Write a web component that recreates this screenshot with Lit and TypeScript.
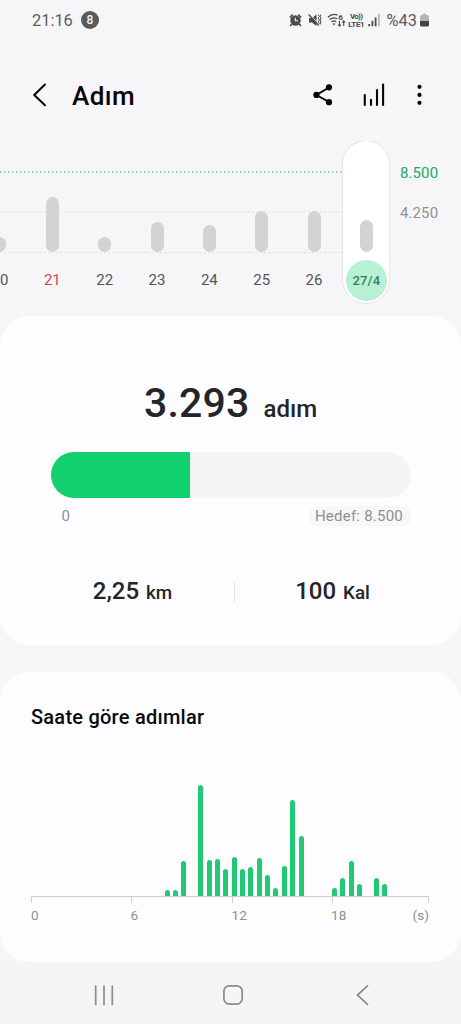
import { LitElement, html, css, svg } from "lit";
import { customElement } from "lit/decorators.js";
import { classMap } from "lit/directives/class-map.js";

interface Day {
  label: string;
  height: number;
  kind?: "sunday" | "today";
}

const DAYS: Day[] = [
  { label: "20", height: 15 },
  { label: "21", height: 55, kind: "sunday" },
  { label: "22", height: 15 },
  { label: "23", height: 30 },
  { label: "24", height: 27 },
  { label: "25", height: 41 },
  { label: "26", height: 41 },
  { label: "27/4", height: 32, kind: "today" },
];

// Bar heights per half hour, midnight to midnight.
const HALF_HOURS: number[] = [
  0, 0, 0, 0, 0, 0, 0, 0, 0, 0, 0, 0, 0, 0, 0, 0,
  6.5, 6.5, 35.5, 0, 111, 36.5, 37, 27, 39, 27, 29, 38.5, 21, 8, 30, 96.5,
  60, 0, 0, 0, 8, 18, 35, 12, 0, 18, 12, 0, 0, 0, 0, 0,
];

const STEPS = 3293;
const GOAL = 8500;

@customElement("status-bar")
class StatusBar extends LitElement {
  static styles = css`
    :host {
      display: flex;
      align-items: center;
      height: 40px;
      padding: 0 32px 0 32px;
      color: #5c5c5f;
      font-size: 16.4px;
    }
    .badge {
      display: flex;
      align-items: center;
      justify-content: center;
      width: 18px;
      height: 18px;
      margin-left: 8px;
      border-radius: 50%;
      background: #5a5a5c;
      color: #f6f6f8;
      font-size: 12px;
      font-weight: 500;
    }
    .icons {
      margin-left: auto;
      margin-right: 5px;
    }
    .battery {
      margin-left: 3px;
    }
    .tiny {
      font-size: 8px;
      font-weight: 700;
    }
    svg {
      display: block;
    }
  `;
  render() {
    return html`
      <span>21:16</span>
      <span class="badge">8</span>
      <svg class="icons" width="94" height="20" viewBox="288 10 94 20" fill="#4a4a4c">
        ${svg`
          <circle cx="295.5" cy="20.5" r="5.2"/>
          <path d="M295.3 17.800v3h2.700" fill="none" stroke="#f6f6f8" stroke-width="1.100"/>
          <path d="M289.8 17.5l3-3M301.2 17.5l-3-3M291.6 24l-1.400 2M299.400 24l1.400 2" stroke="#4a4a4c" stroke-width="1.700"/>
          <path d="M309 18h3l4.500-3.500v11.500l-4.500-3.500h-3z"/>
          <path d="M309.600 14l9.500 10.500" stroke="#f6f6f8" stroke-width="1"/>
          <path d="M308.700 14.500l10 11" stroke="#4a4a4c" stroke-width="1.300"/>
          <path d="M318.200 14.500l1.200 1.800-1.200 1.900 1.200 1.900-1.200 1.900 1.200 1.900M320.900 14.500l-.7 1.800.7 1.900-.7 1.900.7 1.900-.7 2.500" fill="none" stroke="#4a4a4c" stroke-width="1"/>
          <path d="M328 17.200a8.800 8.800 0 0 1 9.600-2M329.700 19.600a6.500 6.500 0 0 1 7.500-.8M331.600 21.900a3.800 3.800 0 0 1 4.600-.2" fill="none" stroke="#4a4a4c" stroke-width="1.300"/>
          <path d="M332.500 23.500h3l-1.500 1.900z"/>
          <text class="tiny" x="338.300" y="19.500">6</text>
          <path d="M339.500 21v5M338 24.500l1.500 1.700 1.500-1.700M343.700 26v-5M342.200 22.500l1.500-1.700 1.500 1.700" fill="none" stroke="#4a4a4c" stroke-width="1.100"/>
          <text class="tiny" x="350" y="19.300" textLength="13">Vo))</text>
          <text class="tiny" x="348.200" y="27" textLength="16.500">LTE1</text>
          <path d="M368.300 24h1.800v2.300h-1.800zM371.500 20.800h1.800v5.500h-1.800zM374.700 17.500h1.800v8.800h-1.800z"/>
          <path d="M378 14h1.800v12.300h-1.800z" fill="#b8b8ba"/>
        `}
      </svg>
      <span>%43</span>
      <svg class="battery" width="9" height="14" viewBox="0 0 9 14">
        ${svg`
          <path d="M3 .5h3v1.500h1.500q1.500 0 1.500 1.500v5H0v-5q0-1.500 1.500-1.500H3z" fill="#b4b4b6"/>
          <path d="M0 8h9v4q0 1.500-1.500 1.500h-6q-1.500 0-1.500-1.500z" fill="#454547"/>
        `}
      </svg>
    `;
  }
}

@customElement("title-bar")
class TitleBar extends LitElement {
  static styles = css`
    :host {
      display: flex;
      align-items: center;
      height: 101px;
      box-sizing: border-box;
      padding: 9px 31px 0 31px;
      color: #050505;
    }
    h1 {
      margin: 1px auto 0 23px;
      font-size: 26px;
      line-height: 32px;
      font-weight: 500;
      letter-spacing: 0.450px;
    }
    svg {
      display: block;
      fill: none;
      stroke: currentColor;
    }
    .share {
      margin-right: 28px;
    }
    .bars {
      margin-right: 22px;
    }
    .solid {
      fill: currentColor;
      stroke: none;
    }
  `;
  render() {
    return html`
      <svg width="18" height="26" viewBox="31 82 18 26" stroke-width="2" stroke-linecap="round" stroke-linejoin="round">
        ${svg`<path d="M45 84.500L34.200 95 45 105.200"/>`}
      </svg>
      <h1>Adım</h1>
      <svg class="share" width="22" height="24" viewBox="312 83 22 24" stroke-width="2">
        ${svg`<path d="M329 87.500L316.500 95 329 102"/>
        <g class="solid"><circle cx="329" cy="87.300" r="3.100"/><circle cx="316.400" cy="94.900" r="3.100"/><circle cx="329" cy="102.200" r="3.100"/></g>`}
      </svg>
      <svg class="bars" width="24" height="26" viewBox="362 82 24 26" stroke-width="2.100" stroke-linecap="round">
        ${svg`<path d="M364.800 95v10M371 99.700v5.300M377 90v15M383.100 84.500v20.500"/>`}
      </svg>
      <svg class="solid" width="22" height="24" viewBox="408 83 22 24">
        ${svg`<circle cx="419.500" cy="86.800" r="2.100"/><circle cx="419.500" cy="94.900" r="2.100"/><circle cx="419.500" cy="102.800" r="2.100"/>`}
      </svg>
    `;
  }
}

@customElement("daily-chart")
class DailyChart extends LitElement {
  static styles = css`
    :host {
      display: grid;
      grid-template-columns: 392px 1fr;
      height: 175px;
      overflow: hidden;
    }
    .grid,
    .days {
      grid-area: 1 / 1;
    }
    .grid {
      display: block;
    }
    .days {
      display: flex;
      width: 418.800px;
      margin-left: -26.200px;
      align-items: flex-start;
    }
    .day {
      display: flex;
      flex-direction: column;
      align-items: center;
      justify-content: flex-end;
      flex: 0 0 52.350px;
      height: 162px;
      box-sizing: border-box;
      padding-bottom: 2.500px;
      color: #555558;
    }
    .slot {
      display: flex;
      justify-content: center;
      flex: 1;
      align-items: flex-end;
      padding-bottom: 7.500px;
    }
    .bar {
      width: 13px;
      border-radius: 6.500px;
      background: #d3d3d4;
    }
    .label {
      display: flex;
      align-items: center;
      justify-content: center;
      width: 41px;
      height: 41px;
      flex: none;
      border-radius: 50%;
      font-size: 15px;
    }
    .sunday {
      color: #d6455a;
    }
    .today {
      flex-basis: 46px;
      margin-left: 3.200px;
      border-radius: 23px;
      background: #fff;
      box-shadow: 0 0 0 0.500px #dcdcde, 0 0 2px rgba(0, 0, 0, 0.080);
    }
    .today .label {
      background: #b7f0d4;
      color: #2e8460;
      font-size: 13px;
      font-weight: 500;
      letter-spacing: 0.150px;
    }
    .scale {
      display: flex;
      flex-direction: column;
      padding: 21.500px 0 0 8px;
      gap: 20px;
      font-size: 15px;
      line-height: 20px;
      letter-spacing: 0.100px;
      color: #929296;
    }
    .goal {
      color: #22a869;
    }
  `;
  render() {
    return html`
      <svg class="grid" width="392" height="175" fill="none">
        ${svg`
          <path d="M0 31h344" stroke="#6fc9a8" stroke-width="1.500" stroke-dasharray="1.500 2.500"/>
          <path d="M0 71h344M0 111.500h344" stroke="#dadadd" stroke-width="1.200" stroke-dasharray="1.500 2.500"/>
        `}
      </svg>
      <div class="days">
        ${DAYS.map(
          (d) => html`
            <div class=${classMap({ day: true, sunday: d.kind === "sunday", today: d.kind === "today" })}>
              <div class="slot"><div class="bar" style="height:${d.height}px"></div></div>
              <div class="label">${d.label}</div>
            </div>
          `
        )}
      </div>
      <div class="scale"><span class="goal">8.500</span><span>4.250</span></div>
    `;
  }
}

@customElement("summary-card")
class SummaryCard extends LitElement {
  static styles = css`
    :host {
      display: block;
      height: 329px;
      box-sizing: border-box;
      padding-top: 62px;
      border-radius: 30px;
      background: #fdfdff;
      color: #252528;
      font-weight: 500;
    }
    .total {
      display: flex;
      align-items: baseline;
      justify-content: center;
      gap: 14px;
      height: 50px;
      line-height: 50px;
      font-size: 41px;
      letter-spacing: 0.200px;
    }
    .total small {
      font-size: 24px;
      letter-spacing: 0;
    }
    .track {
      height: 46px;
      margin: 24px 50px 0 51px;
      border-radius: 23px;
      overflow: hidden;
      background: #f5f5f5;
    }
    .fill {
      height: 100%;
      background: #12d06e;
    }
    .range {
      display: flex;
      justify-content: space-between;
      align-items: center;
      margin: 8px 50px 0 61.500px;
      font-size: 15px;
      line-height: 20px;
      font-weight: 400;
      color: #8f8f91;
    }
    .chip {
      padding: 0 8px 0 6px;
      border-radius: 8px;
      background: #f7f7f7;
      letter-spacing: 0.230px;
    }
    .stats {
      display: grid;
      grid-template-columns: 202px 1px 196px;
      align-items: center;
      margin: 49.500px 0 0 31.500px;
      height: 30px;
    }
    .stat {
      display: flex;
      align-items: baseline;
      justify-content: center;
      gap: 7px;
      font-size: 24px;
      line-height: 30px;
    }
    .stat small {
      font-size: 18.800px;
    }
    .rule {
      height: 20px;
      background: #e4e4e6;
    }
  `;
  render() {
    return html`
      <div class="total"><span>3.293</span><small>adım</small></div>
      <div class="track"><div class="fill" style="width:${(STEPS / GOAL) * 100}%"></div></div>
      <div class="range"><span>0</span><span class="chip">Hedef: 8.500</span></div>
      <div class="stats">
        <div class="stat"><span>2,25</span><small>km</small></div>
        <div class="rule"></div>
        <div class="stat"><span>100</span><small>Kal</small></div>
      </div>
    `;
  }
}

@customElement("hourly-card")
class HourlyCard extends LitElement {
  static styles = css`
    :host {
      display: block;
      height: 290px;
      box-sizing: border-box;
      margin-top: 27px;
      padding: 32px 32px 0 31px;
      border-radius: 30px;
      background: #fdfdff;
    }
    h2 {
      margin: 0;
      font-size: 20px;
      line-height: 26px;
      font-weight: 500;
      letter-spacing: 0.240px;
      color: #0a0a0a;
    }
    .plot {
      display: grid;
      grid-template-columns: repeat(48, 8.360px);
      align-items: end;
      height: 166px;
    }
    .bar {
      width: 5px;
      border-radius: 2.500px 2.500px 0 0;
      background: #20c972;
    }
    .axis {
      display: grid;
      grid-template-columns: 100.300px 101px 100px 1fr;
      border-top: 1px solid #cfcfd1;
      border-right: 1px solid #cfcfd1;
      height: 7px;
      box-sizing: border-box;
    }
    .tick {
      border-left: 1px solid #cfcfd1;
    }
    .hours {
      display: grid;
      grid-template-columns: 99.500px 101px 99.500px 1fr auto;
      padding-top: 3px;
      font-size: 13.600px;
      line-height: 18px;
      color: #8f8f92;
    }
  `;
  render() {
    return html`
      <h2>Saate göre adımlar</h2>
      <div class="plot">
        ${HALF_HOURS.map((h) => html`<div class="bar" style="height:${h}px"></div>`)}
      </div>
      <div class="axis">
        <div class="tick"></div><div class="tick"></div><div class="tick"></div><div class="tick"></div>
      </div>
      <div class="hours">
        <span>0</span><span>6</span><span>12</span><span>18</span><span>(s)</span>
      </div>
    `;
  }
}

@customElement("nav-bar")
class NavBar extends LitElement {
  static styles = css`
    :host {
      display: flex;
      justify-content: space-between;
      height: 62px;
      box-sizing: border-box;
      padding: 22px 87px 0 93px;
      background: #f5f5f5;
    }
    svg {
      display: block;
      fill: none;
      stroke: #8a8a8c;
      stroke-width: 1.700px;
      stroke-linecap: round;
    }
  `;
  render() {
    return html`
      <svg width="22" height="22">${svg`<path d="M2.700 2v18.500M11 2v18.500M19.300 2v18.500"/>`}</svg>
      <svg width="22" height="22">${svg`<rect x="0.900" y="1.800" width="18.300" height="18.300" rx="5.500"/>`}</svg>
      <svg width="22" height="22">${svg`<path d="M15.500 1.800L5.500 11l10 9.300"/>`}</svg>
    `;
  }
}

@customElement("app-root")
class AppRoot extends LitElement {
  static styles = css`
    :host {
      display: block;
      width: 461px;
      height: 1024px;
      overflow: hidden;
      background: #f6f6f8;
      font-family: Roboto, "Noto Sans", sans-serif;
    }
  `;
  render() {
    return html`
      <status-bar></status-bar>
      <title-bar></title-bar>
      <daily-chart></daily-chart>
      <summary-card></summary-card>
      <hourly-card></hourly-card>
      <nav-bar></nav-bar>
    `;
  }
}
